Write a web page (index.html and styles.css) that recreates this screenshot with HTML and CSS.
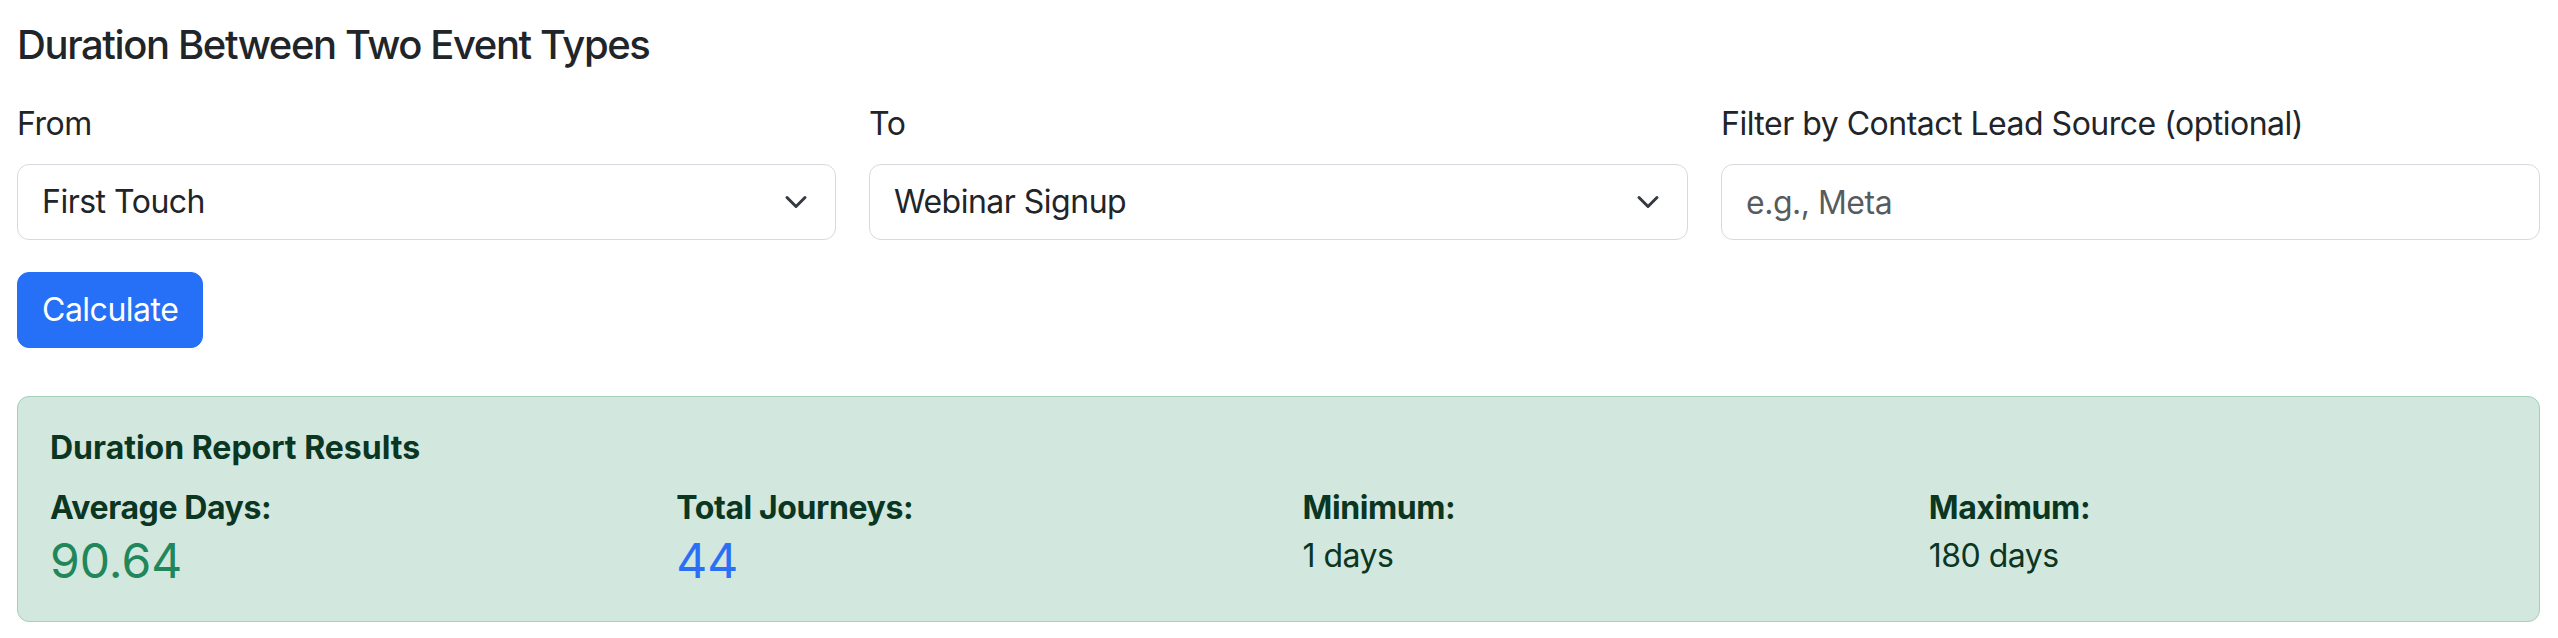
FILE: index.html
```html
<!DOCTYPE html>
<html lang="en">
<head>
<meta charset="utf-8">
<title>Duration Between Two Event Types</title>
<link rel="stylesheet" href="styles.css">
</head>
<body>
<main class="page">
  <h5 class="title">Duration Between Two Event Types</h5>
  <div class="fields">
    <div class="field">
      <label class="label" for="from">From</label>
      <div class="select-wrap">
        <select id="from" class="control select">
          <option>First Touch</option>
        </select>
        <svg class="chevron" viewBox="0 0 16 16" width="32" height="24" aria-hidden="true"><path d="m2 5 6 6 6-6" fill="none" stroke="#343a40" stroke-width="2" stroke-linecap="round" stroke-linejoin="round"/></svg>
      </div>
    </div>
    <div class="field">
      <label class="label" for="to">To</label>
      <div class="select-wrap">
        <select id="to" class="control select">
          <option>Webinar Signup</option>
        </select>
        <svg class="chevron" viewBox="0 0 16 16" width="32" height="24" aria-hidden="true"><path d="m2 5 6 6 6-6" fill="none" stroke="#343a40" stroke-width="2" stroke-linecap="round" stroke-linejoin="round"/></svg>
      </div>
    </div>
    <div class="field">
      <label class="label" for="src">Filter by Contact Lead Source (optional)</label>
      <input id="src" class="control" type="text" placeholder="e.g., Meta">
    </div>
  </div>
  <div class="actions">
    <button class="btn" type="button">Calculate</button>
  </div>
  <section class="results">
    <h6 class="results-title">Duration Report Results</h6>
    <div class="stats">
      <div class="stat">
        <div class="stat-label">Average Days:</div>
        <div class="stat-big green">90.64</div>
      </div>
      <div class="stat">
        <div class="stat-label">Total Journeys:</div>
        <div class="stat-big blue">44</div>
      </div>
      <div class="stat">
        <div class="stat-label">Minimum:</div>
        <div class="stat-small">1 days</div>
      </div>
      <div class="stat">
        <div class="stat-label">Maximum:</div>
        <div class="stat-small">180 days</div>
      </div>
    </div>
  </section>
</main>
</body>
</html>
```

FILE: styles.css
```css
* { box-sizing: border-box; }

html, body {
  margin: 0;
  padding: 0;
  background: #ffffff;
}

body {
  font-family: Inter, "Liberation Sans", Arial, sans-serif;
  font-size: 32px;
  line-height: 48px;
  letter-spacing: -0.5px;
  color: #212529;
}

.page {
  padding: 21px 18px 0 17px;
}

.title {
  margin: 0 0 31px 0;
  font-size: 40px;
  line-height: 48px;
  font-weight: 500;
  letter-spacing: -1.4px;
  color: #212529;
}

.fields {
  display: grid;
  grid-template-columns: repeat(3, 1fr);
  column-gap: 33px;
}

.field {
  display: flex;
  flex-direction: column;
}

.label {
  display: block;
  margin-bottom: 16px;
  font-size: 32px;
  line-height: 48px;
}

.select-wrap {
  position: relative;
}

.control {
  display: block;
  width: 100%;
  height: 76px;
  margin: 0;
  padding: 13px 24px;
  border: 1px solid #d6dade;
  border-radius: 12px;
  background: #ffffff;
  font-family: inherit;
  font-size: 32px;
  line-height: 48px;
  letter-spacing: -0.5px;
  color: #212529;
  outline: none;
}

.select {
  appearance: none;
  -webkit-appearance: none;
  padding-right: 72px;
}

.control::placeholder {
  color: rgba(33, 37, 41, 0.75);
}

.chevron {
  position: absolute;
  right: 24px;
  top: 26px;
  pointer-events: none;
}

.actions {
  margin-top: 32px;
}

.btn {
  display: inline-block;
  height: 76px;
  padding: 13px 24px;
  border: 1px solid #2570f6;
  border-radius: 12px;
  background: #2570f6;
  color: #ffffff;
  font-family: inherit;
  font-size: 32px;
  line-height: 48px;
  letter-spacing: -0.5px;
}

.results {
  margin-top: 48px;
  padding: 32px;
  border: 1px solid #a3cfbb;
  border-radius: 12px;
  background: #d2e7de;
  color: #0a3622;
}

.results-title {
  margin: 0 0 17px 0;
  font-size: 32px;
  line-height: 38px;
  font-weight: 700;
  letter-spacing: 0;
}

.stats {
  display: grid;
  grid-template-columns: repeat(4, 1fr);
  column-gap: 48px;
}

.stat-label {
  font-size: 32px;
  line-height: 48px;
  font-weight: 700;
  letter-spacing: -0.4px;
}

.stat-big {
  font-size: 48px;
  line-height: 57px;
  font-weight: 400;
  letter-spacing: 0;
}

.stat-small {
  font-size: 32px;
  line-height: 48px;
}

.green { color: #21875a; }
.blue { color: #2a6ff5; }
```
